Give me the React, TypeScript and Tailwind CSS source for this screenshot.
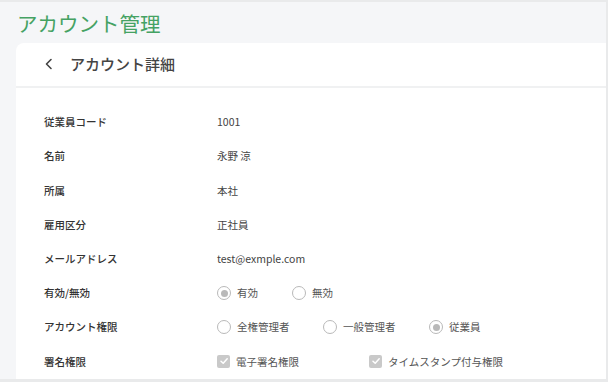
import React from "react";

const font = { fontFamily: '"Noto Sans CJK JP", "Noto Sans", sans-serif' };

function Radio({ checked, label }: { checked?: boolean; label: string }) {
  return (
    <div className="flex items-center gap-[6px]">
      <span className="w-[14px] h-[14px] rounded-full border border-[#b9b9b9] bg-white flex items-center justify-center shrink-0">
        {checked && <span className="w-[7px] h-[7px] rounded-full bg-[#b9b9b9]" />}
      </span>
      <span className="text-[10.5px] text-[#555]">{label}</span>
    </div>
  );
}

function Check({ label }: { label: string }) {
  return (
    <div className="flex items-center gap-[6px]">
      <span className="w-[13px] h-[13px] rounded-[2px] bg-[#c9c9c9] flex items-center justify-center shrink-0">
        <svg width="10" height="10" viewBox="0 0 10 10" fill="none">
          <path d="M2 5.2 L4.2 7.3 L8.2 2.8" stroke="#fff" strokeWidth="1.5" strokeLinecap="round" strokeLinejoin="round" />
        </svg>
      </span>
      <span className="text-[10.5px] text-[#555]">{label}</span>
    </div>
  );
}

function Row({ label, children }: { label: string; children: React.ReactNode }) {
  return (
    <div className="flex items-center h-[34.2px]">
      <div className="w-[173px] text-[10.5px] font-medium text-[#333]">{label}</div>
      <div className="flex items-center text-[10.5px] text-[#444]">{children}</div>
    </div>
  );
}

export default function App() {
  return (
    <div
      className="w-[608px] h-[382px] overflow-hidden bg-[#f5f6f8] border-t-2 border-r-2 border-b-[3px] border-[#e9eaeb] flex flex-col"
      style={font}
    >
      <div className="pl-[17px] pt-[7px] h-[41px] text-[20.5px] leading-[28px] text-[#45a263]">
        アカウント管理
      </div>
      <div className="ml-[16px] flex-1 bg-white rounded-tl-[8px] flex flex-col">
        <div className="h-[45px] flex items-center pl-[28px] border-b-2 border-[#f0f1f2]">
          <svg width="10" height="12" viewBox="0 0 10 12" fill="none" className="mr-[16px] mt-[-2px]">
            <path d="M7 1.5 L2.5 6 L7 10.5" stroke="#444" strokeWidth="1.6" strokeLinecap="round" strokeLinejoin="round" />
          </svg>
          <span className="text-[15px] font-medium text-[#444] mt-[-1px]">アカウント詳細</span>
        </div>
        <div className="pl-[28px] pt-[17px] flex flex-col">
          <Row label="従業員コード">1001</Row>
          <Row label="名前">永野 涼</Row>
          <Row label="所属">本社</Row>
          <Row label="雇用区分">正社員</Row>
          <Row label="メールアドレス">test@exmple.com</Row>
          <Row label="有効/無効">
            <div className="w-[75px]"><Radio checked label="有効" /></div>
            <Radio label="無効" />
          </Row>
          <Row label="アカウント権限">
            <div className="w-[106px]"><Radio label="全権管理者" /></div>
            <div className="w-[106px]"><Radio label="一般管理者" /></div>
            <Radio checked label="従業員" />
          </Row>
          <Row label="署名権限">
            <div className="w-[152px]"><Check label="電子署名権限" /></div>
            <Check label="タイムスタンプ付与権限" />
          </Row>
        </div>
      </div>
    </div>
  );
}
